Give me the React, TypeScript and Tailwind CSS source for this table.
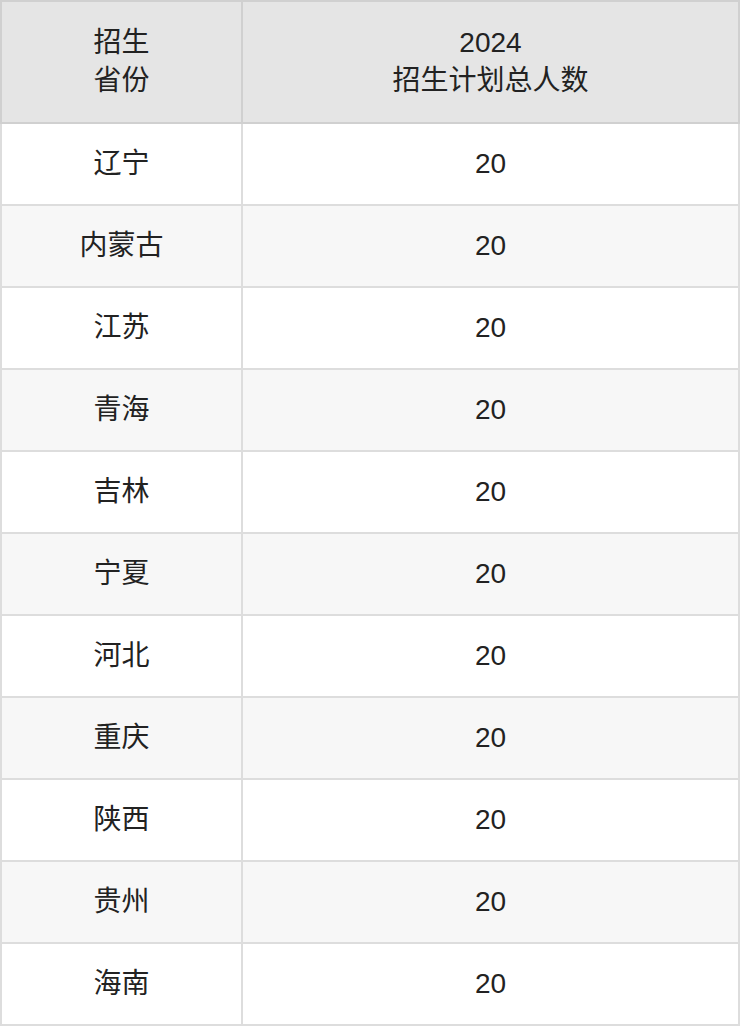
import React from "react";

const rows = ["辽宁", "内蒙古", "江苏", "青海", "吉林", "宁夏", "河北", "重庆", "陕西", "贵州", "海南"];

export default function App() {
  return (
    <div
      className="w-[740px] bg-white text-[#222] text-[28px] leading-[38px]"
      style={{ fontFamily: '"Liberation Sans", "Noto Sans CJK SC", sans-serif' }}
    >
      <div className="flex border-2 border-[#d0d0d0] bg-[#e5e5e5]">
        <div className="w-[239px] h-[120px] flex flex-col items-center justify-center">
          <span>招生</span>
          <span>省份</span>
        </div>
        <div className="flex-1 h-[120px] border-l-2 border-[#d0d0d0] flex flex-col items-center justify-center">
          <span>2024</span>
          <span>招生计划总人数</span>
        </div>
      </div>
      {rows.map((name, i) => (
        <div
          key={name}
          className={
            "flex border-2 border-t-0 border-[#dddddd] " + (i % 2 === 1 ? "bg-[#f7f7f7]" : "bg-white")
          }
        >
          <div className="w-[239px] h-[80px] flex items-center justify-center">{name}</div>
          <div className="flex-1 h-[80px] border-l-2 border-[#dddddd] flex items-center justify-center">20</div>
        </div>
      ))}
    </div>
  );
}
